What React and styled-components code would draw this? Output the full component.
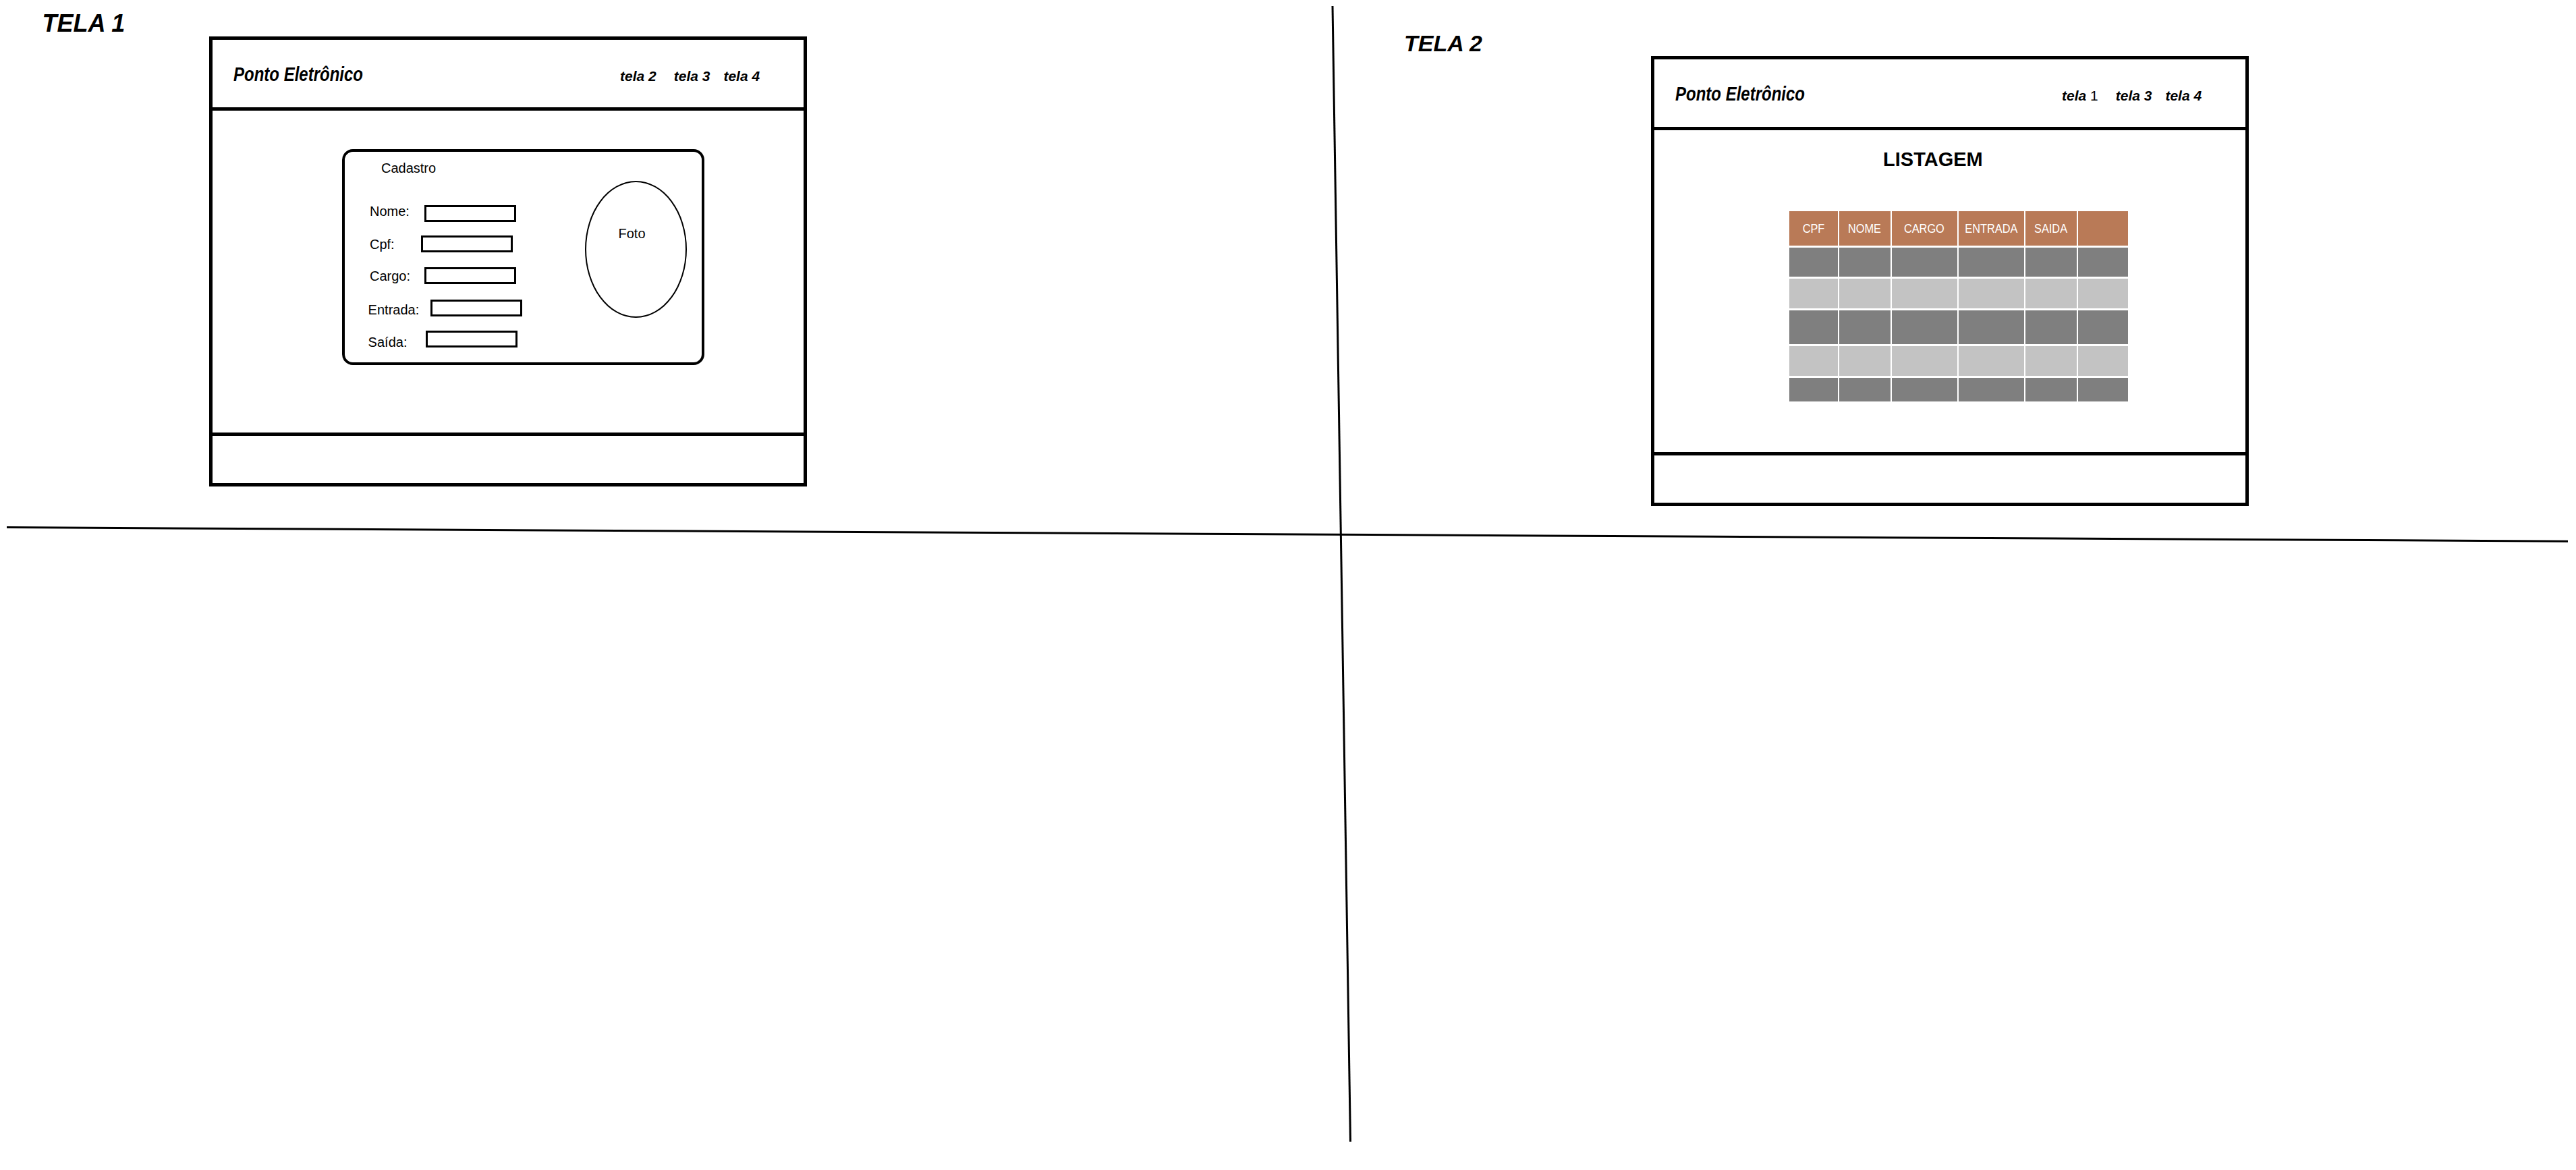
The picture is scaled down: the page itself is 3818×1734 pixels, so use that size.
import React from 'react';
import styled, { createGlobalStyle } from 'styled-components';

const GlobalStyle = createGlobalStyle`
  html, body { margin: 0; padding: 0; background: #fff; }
  body { font-family: "Liberation Sans", Arial, sans-serif; color: #000; }
  *, *::before, *::after { box-sizing: border-box; }
`;

const Page = styled.div`
  position: relative;
  width: 3818px;
  height: 1734px;
  overflow: hidden;
  background: #fff;
`;

const TopRow = styled.div`
  display: flex;
  align-items: flex-start;
`;

const Sheet = styled.section`
  display: grid;
  grid-template-columns: ${(p) => p.$labelCol}px auto;
  align-items: start;
  width: ${(p) => (p.$width ? `${p.$width}px` : 'auto')};
  flex: ${(p) => (p.$width ? 'none' : '1')};
  padding: ${(p) => p.$top}px 0 0 ${(p) => p.$left}px;
`;

const SheetLabel = styled.h1`
  margin: 0;
  font: italic 700 ${(p) => p.$size}px/1 "Liberation Sans", Arial, sans-serif;
  white-space: nowrap;
`;

const Frame = styled.div`
  width: 886px;
  margin-top: ${(p) => p.$offset}px;
  border: 5px solid #000;
  display: flex;
  flex-direction: column;
`;

const Header = styled.header`
  display: grid;
  grid-template-columns: 573px auto;
  align-items: baseline;
  height: 105px;
  padding: 35.6px 0 0 31.5px;
  border-bottom: 5px solid #000;
`;

const Brand = styled.span`
  display: inline-block;
  font: italic 700 30px/1 "Liberation Sans", Arial, sans-serif;
  transform: scaleX(0.8);
  transform-origin: left center;
  white-space: nowrap;
`;

const Nav = styled.nav`
  display: flex;
  align-items: baseline;
`;

const NavLink = styled.span`
  margin-left: ${(p) => p.$gap}px;
  font: italic 700 21px/1 "Liberation Sans", Arial, sans-serif;
  white-space: nowrap;
`;

const Plain = styled.span`
  font-style: normal;
  font-weight: 400;
`;

const Main = styled.main`
  height: 477px;
  padding: ${(p) => p.$pt}px 0 0 ${(p) => p.$pl}px;
`;

const Footer = styled.footer`
  height: 75px;
  border-top: 5px solid #000;
`;

/* ---------- Tela 1 ---------- */
const Card = styled.div`
  display: flex;
  width: 537px;
  height: 320px;
  border: 4px solid #000;
  border-radius: 16px;
  padding: 13.4px 22px 0 37px;
`;

const FormColumn = styled.div`
  flex: 1;
  display: flex;
  flex-direction: column;
`;

const CardTitle = styled.div`
  margin-left: 17px;
  font: 400 20px/1 "Liberation Sans", Arial, sans-serif;
`;

const FieldRow = styled.div`
  display: flex;
  align-items: flex-start;
  height: 25px;
  margin-top: ${(p) => p.$top}px;
  margin-left: ${(p) => p.$shift}px;
`;

const FieldLabel = styled.span`
  flex: none;
  width: ${(p) => p.$w}px;
  margin-top: ${(p) => p.$dy}px;
  font: 400 20px/1 "Liberation Sans", Arial, sans-serif;
  white-space: nowrap;
`;

const FieldBox = styled.div`
  flex: none;
  width: ${(p) => p.$w}px;
  height: 25px;
  border: 3px solid #000;
`;

const Photo = styled.div`
  flex: none;
  width: 151px;
  height: 203px;
  margin-top: 29.6px;
  border: 2.5px solid #000;
  border-radius: 50%;
  display: flex;
  justify-content: center;
  padding: 66px 12px 0 0;
  font: 400 20px/1 "Liberation Sans", Arial, sans-serif;
`;

/* ---------- Tela 2 ---------- */
const ListTitle = styled.h2`
  margin: 0 0 0 139.6px;
  font: 700 29px/1 "Liberation Sans", Arial, sans-serif;
`;

const Table = styled.div`
  display: grid;
  width: max-content;
  margin-top: 62px;
  grid-template-columns: 72.5px 75.5px 97px 97.5px 76px 73.5px;
  grid-template-rows: 51px 43px 44px 50.5px 44px 35px;
  column-gap: 2px;
  row-gap: 3px;
  background: #fff;
`;

const HeadCell = styled.div`
  background: #b97a57;
  color: #fff;
  display: flex;
  align-items: center;
  justify-content: center;
  font: 400 19px/1 "Liberation Sans", Arial, sans-serif;
  white-space: nowrap;
`;

const HeadText = styled.span`
  display: inline-block;
  transform: scaleX(0.86);
`;

const BodyCell = styled.div`
  background: ${(p) => (p.$dark ? '#7f7f7f' : '#c3c3c3')};
`;

const Sketch = styled.svg`
  position: absolute;
  left: 0;
  top: 0;
  width: 3818px;
  height: 1734px;
  pointer-events: none;
`;

const fields = [
  { label: 'Nome:', top: 45.1, shift: 0, lw: 80.5, bw: 136.5, dy: -0.9 },
  { label: 'Cpf:', top: 20.5, shift: 0, lw: 76, bw: 136, dy: 2.1 },
  { label: 'Cargo:', top: 21.4, shift: 0, lw: 80.5, bw: 136.5, dy: 2.7 },
  { label: 'Entrada:', top: 23.2, shift: -2.4, lw: 92.4, bw: 136, dy: 5 },
  { label: 'Saída:', top: 21.4, shift: -2.4, lw: 85.4, bw: 136, dy: 6.1 },
];

const columns = ['CPF', 'NOME', 'CARGO', 'ENTRADA', 'SAIDA', ''];
const rows = [true, false, true, false, true];

function AppHeader({ links }) {
  return (
    <Header>
      <div>
        <Brand>Ponto Eletrônico</Brand>
      </div>
      <Nav>
        {links.map((l, i) => (
          <NavLink key={i} $gap={[0, 26, 20][i]}>
            {l}
          </NavLink>
        ))}
      </Nav>
    </Header>
  );
}

export default function App() {
  return (
    <Page>
      <GlobalStyle />
      <TopRow>
        <Sheet $width={1975} $labelCol={247} $top={16.7} $left={62.5}>
          <SheetLabel $size={36}>TELA 1</SheetLabel>
          <Frame $offset={37.8}>
            <AppHeader links={['tela 2', 'tela 3', 'tela 4']} />
            <Main $pt={57} $pl={192.5}>
              <Card>
                <FormColumn>
                  <CardTitle>Cadastro</CardTitle>
                  {fields.map((f) => (
                    <FieldRow key={f.label} $top={f.top} $shift={f.shift}>
                      <FieldLabel $w={f.lw} $dy={f.dy}>
                        {f.label}
                      </FieldLabel>
                      <FieldBox $w={f.bw} />
                    </FieldRow>
                  ))}
                </FormColumn>
                <Photo>Foto</Photo>
              </Card>
            </Main>
            <Footer />
          </Frame>
        </Sheet>
        <Sheet $labelCol={365.5} $top={47.3} $left={106}>
          <SheetLabel $size={34}>TELA 2</SheetLabel>
          <Frame $offset={35.7}>
            <AppHeader
              links={[
                <>
                  tela <Plain>1</Plain>
                </>,
                'tela 3',
                'tela 4',
              ]}
            />
            <Main $pt={29} $pl={200}>
              <ListTitle>LISTAGEM</ListTitle>
              <Table>
                {columns.map((c, i) => (
                  <HeadCell key={i}>
                    <HeadText>{c}</HeadText>
                  </HeadCell>
                ))}
                {rows.map((dark, r) =>
                  columns.map((_, c) => <BodyCell key={`${r}-${c}`} $dark={dark} />)
                )}
              </Table>
            </Main>
            <Footer />
          </Frame>
        </Sheet>
      </TopRow>
      <Sketch viewBox="0 0 3818 1734">
        <line x1="10" y1="781.6" x2="3806" y2="802.2" stroke="#000" strokeWidth="3" />
        <line x1="1975" y1="9" x2="2001.5" y2="1692" stroke="#000" strokeWidth="3" />
      </Sketch>
    </Page>
  );
}
